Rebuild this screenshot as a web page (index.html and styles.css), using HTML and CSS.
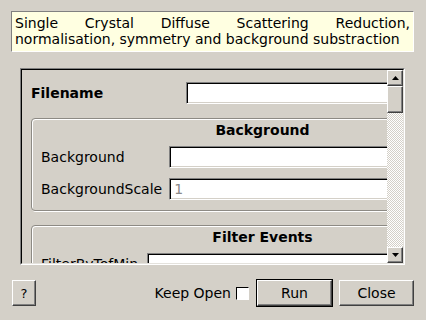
FILE: index.html
```html
<!DOCTYPE html>
<html lang="en">
<head>
    <meta charset="UTF-8">
    <title>SingleCrystalDiffuseReduction</title>
    <link rel="stylesheet" href="styles.css">
</head>
<body>
    <div class="dialog">
        <p class="description">Single Crystal Diffuse Scattering Reduction, normalisation, symmetry and background substraction</p>

        <div class="scroll-frame">
            <div class="scroll-inner">
                <div class="scroll-view">
                    <div class="form">
                        <div class="file-row">
                            <span class="file-label">Filename</span>
                            <span class="input"></span>
                        </div>

                        <div class="group">
                            <div class="group-title">Background</div>
                            <div class="group-grid">
                                <span class="field-label">Background</span>
                                <span class="input"></span>
                                <span class="field-label">BackgroundScale</span>
                                <span class="input"><span class="placeholder">1</span></span>
                            </div>
                        </div>

                        <div class="group">
                            <div class="group-title">Filter Events</div>
                            <div class="group-grid narrow-gap">
                                <span class="field-label">FilterByTofMin</span>
                                <span class="input"></span>
                                <span class="field-label">FilterByTofMax</span>
                                <span class="input"></span>
                            </div>
                        </div>
                    </div>
                </div>

                <div class="scrollbar">
                    <div class="sb-btn">
                        <svg width="7" height="4" viewBox="0 0 7 4"><path d="M3.5 0 L7 4 L0 4 Z" fill="#000"/></svg>
                    </div>
                    <div class="sb-thumb"></div>
                    <div class="sb-track"></div>
                    <div class="sb-btn">
                        <svg width="7" height="4" viewBox="0 0 7 4"><path d="M0 0 L7 0 L3.5 4 Z" fill="#000"/></svg>
                    </div>
                </div>
            </div>
        </div>

        <div class="button-bar">
            <button class="btn btn-help">?</button>
            <div class="spacer"></div>
            <span class="keep-label">Keep Open</span>
            <span class="checkbox"></span>
            <span class="default-wrap"><button class="btn btn-wide">Run</button></span>
            <button class="btn btn-wide">Close</button>
        </div>
    </div>
</body>
</html>
```

FILE: styles.css
```css
* {
    margin: 0;
    padding: 0;
    box-sizing: border-box;
}

body {
    font-family: 'DejaVu Sans', Verdana, sans-serif;
    font-size: 14px;
    background-color: #d4d0c8;
    color: #000000;
    width: 426px;
    height: 320px;
    overflow: hidden;
}

.dialog {
    display: flex;
    flex-direction: column;
    padding-top: 11px;
}

.description {
    margin: 0 12px 0 11px;
    padding: 3px 3px 4px 3px;
    background-color: #ffffe1;
    border: 1px solid;
    border-color: #808080 #ffffff #ffffff #808080;
    text-align: justify;
    line-height: 16px;
}

/* sunken frame around the scrolled form */
.scroll-frame {
    margin: 16px 21px 0 20px;
    height: 197px;
    border: 1px solid;
    border-color: #808080 #ffffff #ffffff #808080;
}

.scroll-inner {
    display: flex;
    height: 100%;
    border: 1px solid;
    border-color: #000000 #e4e2dd #e4e2dd #000000;
}

.scroll-view {
    flex: 1;
    overflow: hidden;
}

.form {
    width: 482px;
    padding: 12px 9px 0 9px;
}

.file-row {
    display: grid;
    grid-template-columns: 155px 1fr;
    align-items: center;
    margin-bottom: 14px;
}

.file-label {
    font-weight: bold;
}

.input {
    display: block;
    height: 22px;
    background-color: #ffffff;
    border: 1px solid;
    border-color: #808080 #ffffff #ffffff #808080;
    box-shadow: inset 1px 1px 0 #000000, inset -1px -1px 0 #d4d0c8;
    padding: 2px 4px;
    line-height: 17px;
}

.placeholder {
    color: #8a8a8a;
}

.group {
    border: 1px solid #8d8a84;
    border-radius: 4px;
    box-shadow: inset 1px 1px 0 #ffffff, 1px 1px 0 #ffffff;
    padding: 3px 10px 10px 9px;
    margin-bottom: 14px;
}

.group-title {
    font-weight: bold;
    text-align: center;
    line-height: 16px;
    padding-bottom: 8px;
}

.group-grid {
    display: grid;
    grid-template-columns: auto 1fr;
    column-gap: 7px;
    row-gap: 10px;
    align-items: center;
}

.group-grid.narrow-gap {
    column-gap: 5px;
}

/* scrollbar */
.scrollbar {
    width: 16px;
    display: flex;
    flex-direction: column;
}

.sb-btn,
.sb-thumb {
    background-color: #d4d0c8;
    border: 1px solid;
    border-color: #ffffff #404040 #404040 #ffffff;
    box-shadow: inset -1px -1px 0 #808080;
}

.sb-btn {
    height: 16px;
    display: flex;
    align-items: center;
    justify-content: center;
}

.sb-thumb {
    height: 27px;
}

.sb-track {
    flex: 1;
    background: repeating-conic-gradient(#ffffff 0 25%, #d4d0c8 0 50%) 0 0 / 2px 2px;
}

/* bottom buttons */
.button-bar {
    display: flex;
    align-items: center;
    margin-top: 14px;
    padding: 0 12px 0 12px;
}

.spacer {
    flex: 1;
}

.btn {
    font-family: inherit;
    font-size: 14px;
    color: #000000;
    height: 26px;
    background-color: #d4d0c8;
    border: 1px solid;
    border-color: #ffffff #404040 #404040 #ffffff;
    box-shadow: inset -1px -1px 0 #808080;
}

.btn-help {
    width: 24px;
    font-size: 13px;
}

.btn-wide {
    width: 75px;
}

.default-wrap {
    display: flex;
    border: 1px solid #000000;
    margin-right: 6px;
}

.keep-label {
    margin-right: 5px;
}

.checkbox {
    width: 13px;
    height: 13px;
    background-color: #ffffff;
    border: 1px solid;
    border-color: #000000 #ffffff #ffffff #000000;
    margin-right: 7px;
}
```
